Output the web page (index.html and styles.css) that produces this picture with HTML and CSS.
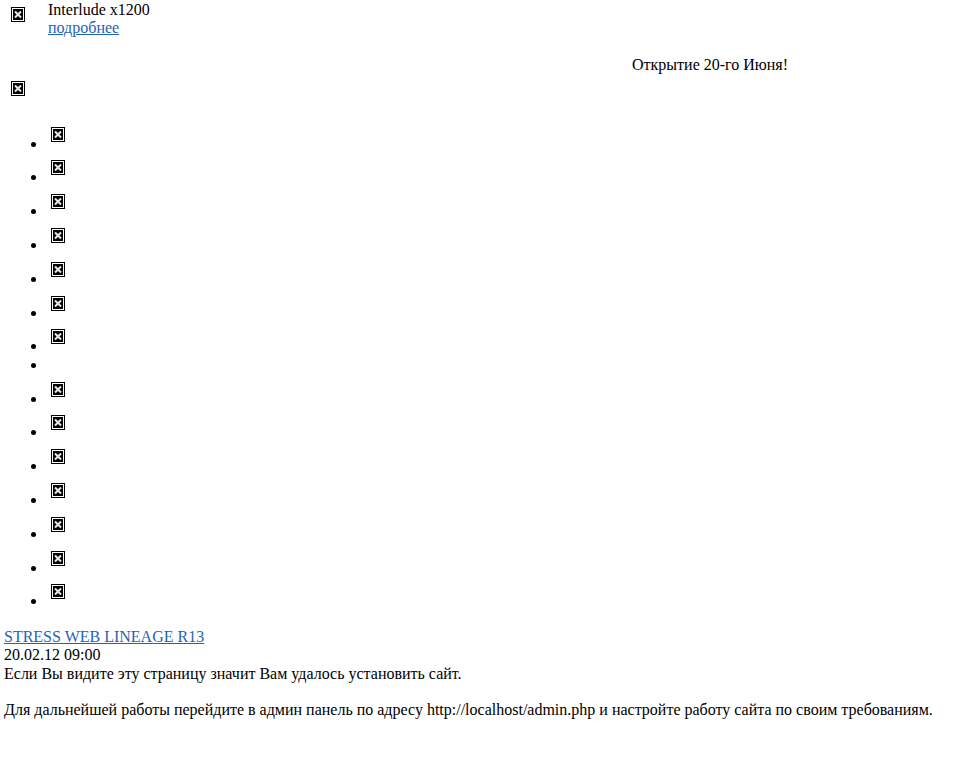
FILE: index.html
```html
<!DOCTYPE html>
<html lang="ru">
<head>
    <meta charset="UTF-8">
    <title>STRESS WEB LINEAGE R13</title>
    <link rel="stylesheet" href="styles.css">
</head>
<body>
    <svg width="0" height="0" class="defs">
        <symbol id="broken" viewBox="0 0 14 15">
            <rect x="0" y="0" width="14" height="15" fill="#000"/>
            <rect x="1" y="1" width="12" height="13" fill="#fff"/>
            <rect x="2" y="2" width="10" height="11" fill="#000"/>
            <path d="M4 4.5 L10 10.5 M10 4.5 L4 10.5" stroke="#e8e8e8" stroke-width="2"/>
        </symbol>
    </svg>

    <div class="server">
        <svg class="icon"><use href="#broken"/></svg>
        <div class="server-info">
            <div>Interlude x1200</div>
            <a href="#">подробнее</a>
        </div>
    </div>

    <div class="opening">Открытие 20-го Июня!</div>

    <svg class="icon banner"><use href="#broken"/></svg>

    <ul class="menu">
        <li><svg class="icon"><use href="#broken"/></svg></li>
        <li><svg class="icon"><use href="#broken"/></svg></li>
        <li><svg class="icon"><use href="#broken"/></svg></li>
        <li><svg class="icon"><use href="#broken"/></svg></li>
        <li><svg class="icon"><use href="#broken"/></svg></li>
        <li><svg class="icon"><use href="#broken"/></svg></li>
        <li><svg class="icon"><use href="#broken"/></svg></li>
        <li class="empty"></li>
        <li><svg class="icon"><use href="#broken"/></svg></li>
        <li><svg class="icon"><use href="#broken"/></svg></li>
        <li><svg class="icon"><use href="#broken"/></svg></li>
        <li><svg class="icon"><use href="#broken"/></svg></li>
        <li><svg class="icon"><use href="#broken"/></svg></li>
        <li><svg class="icon"><use href="#broken"/></svg></li>
        <li><svg class="icon"><use href="#broken"/></svg></li>
    </ul>

    <div class="news">
        <a href="#">STRESS WEB LINEAGE R13</a>
        <div>20.02.12 09:00</div>
        <p>Если Вы видите эту страницу значит Вам удалось установить сайт.</p>
        <p>Для дальнейшей работы перейдите в админ панель по адресу http://localhost/admin.php и настройте работу сайта по своим требованиям.</p>
    </div>
</body>
</html>
```

FILE: styles.css
```css
* {
    margin: 0;
    padding: 0;
    box-sizing: border-box;
}

body {
    font-family: "Liberation Serif", serif;
    font-size: 16px;
    line-height: 18.4px;
    color: #000;
    background: #fff;
}

a {
    color: #1e64b4;
}

.defs {
    display: block;
    height: 0;
}

.icon {
    display: block;
    width: 14px;
    height: 15px;
}

.server {
    display: flex;
    gap: 23px;
    padding: 1px 0 0 11px;
}

.server .icon {
    margin-top: 6px;
}

.opening {
    margin-top: 18px;
    padding-left: 632px;
}

.banner {
    margin: 7px 0 0 11px;
}

.menu {
    margin-top: 21.4px;
    padding-left: 47px;
}

.menu li {
    height: 33.8px;
    padding-top: 9px;
}

.menu li.empty {
    height: 18.4px;
    padding-top: 2px;
}

.menu .icon {
    display: inline-block;
    margin: 0 0 7px 4px;
}

.news {
    margin-top: 18.8px;
    padding-left: 4px;
}

.news p {
    margin-bottom: 18px;
}
```
